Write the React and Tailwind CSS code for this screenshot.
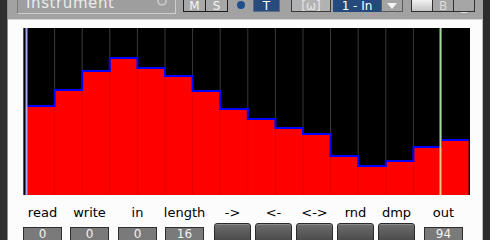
import React from "react";

// step sequencer values, as top-of-bar y inside the graph (px)
const BAR_TOPS = [106, 90, 71, 58, 68, 76, 91, 109, 119, 128, 134, 156, 166, 161, 147, 140].map(
  (y) => y - 28
);

const GRAPH_W = 446;
const GRAPH_H = 167;
const BAR_X0 = 3;
const BAR_W = 27.6;

function StepGraph() {
  const bottom = GRAPH_H;
  let d = `M ${BAR_X0} ${bottom} `;
  BAR_TOPS.forEach((t, i) => {
    const x = BAR_X0 + i * BAR_W;
    d += `L ${x} ${t} L ${x + BAR_W} ${t} `;
  });
  d += `L ${BAR_X0 + 16 * BAR_W} ${bottom} Z`;

  let line = "";
  BAR_TOPS.forEach((t, i) => {
    const x = BAR_X0 + i * BAR_W;
    line += `${i === 0 ? "M" : "L"} ${x} ${t} L ${x + BAR_W} ${t} `;
  });

  const playX = 416.5;
  const playTop = BAR_TOPS[14];

  return (
    <svg width={GRAPH_W} height={GRAPH_H} className="block">
      <rect x="0" y="0" width={GRAPH_W} height={GRAPH_H} fill="#000" />
      {Array.from({ length: 15 }).map((_, i) => (
        <line
          key={i}
          x1={BAR_X0 + (i + 1) * BAR_W}
          x2={BAR_X0 + (i + 1) * BAR_W}
          y1="0"
          y2={GRAPH_H}
          stroke="#3a3a3a"
          strokeWidth="1"
        />
      ))}
      <path d={d} fill="#ff0000" />
      {Array.from({ length: 15 }).map((_, i) => (
        <line
          key={i}
          x1={BAR_X0 + (i + 1) * BAR_W}
          x2={BAR_X0 + (i + 1) * BAR_W}
          y1={Math.max(BAR_TOPS[i], BAR_TOPS[i + 1])}
          y2={GRAPH_H}
          stroke="#e60000"
          strokeWidth="1"
        />
      ))}
      <path d={line} fill="none" stroke="#0000ff" strokeWidth="2" />
      <line x1="2.5" x2="2.5" y1="0" y2={GRAPH_H} stroke="#a8a8ff" strokeWidth="2" />
      <line x1={playX} x2={playX} y1="0" y2={playTop} stroke="#a6d8a0" strokeWidth="2" />
      <line x1={playX} x2={playX} y1={playTop} y2={GRAPH_H} stroke="#f0c88c" strokeWidth="2" />
    </svg>
  );
}

function ValueBox({ value }) {
  return (
    <div className="mt-[7px] w-[39px] h-[15px] shrink-0 bg-[#7a7a7a] border border-[#2e2e2e] text-[#f2f2f2] text-[12px] leading-[13px] text-center">
      {value}
    </div>
  );
}

function PadButton() {
  return (
    <div className="mt-[3px] w-[37px] h-[20px] shrink-0 rounded-[3px] border border-[#2a2a2a] bg-gradient-to-b from-[#6e6e6e] to-[#474747] shadow-[inset_0_1px_0_#8c8c8c]" />
  );
}

function Column({ label, className, children }) {
  return (
    <div className={"flex flex-col items-center " + className}>
      <div className="h-[14px] leading-[14px] text-[13px] text-black whitespace-nowrap">{label}</div>
      {children}
    </div>
  );
}

function HeaderBox({ className, children }) {
  return (
    <div
      className={
        "h-[13px] -mt-[1px] shrink-0 border border-[#1e1e1e] flex items-center justify-center text-[12px] leading-none " +
        className
      }
    >
      {children}
    </div>
  );
}

export default function App() {
  return (
    <div
      className="w-[490px] h-[240px] overflow-hidden flex bg-[#2a2a2a]"
      style={{ fontFamily: '"DejaVu Sans", Verdana, sans-serif' }}
    >
      <div className="w-[7px] h-full shrink-0 bg-[#2f2f2f]" />
      <div className="w-[476px] h-full shrink-0 flex flex-col border-l border-[#8c8c8c]">
        {/* header strip */}
        <div className="h-[19px] shrink-0 bg-[#a2a2a2] flex items-start overflow-hidden">
          <div className="ml-[9px] w-[159px] h-[17px] -mt-[3px] shrink-0 border-t border-l border-[#7c7c7c] border-b border-r border-b-[#cfcfcf] border-r-[#cfcfcf] bg-[#9e9e9e] flex items-start relative">
            <span className="ml-[8px] -mt-[2px] text-[15px] leading-[15px] tracking-[0.6px] text-[#ececec]">
              Instrument
            </span>
            <div className="absolute left-[139px] -top-[2px] w-[10px] h-[10px] rounded-full border-2 border-[#c4c4c4]" />
          </div>
          <HeaderBox className="ml-[7px] w-[23px] bg-[#a8a8a8] text-[#f4f4f4]">M</HeaderBox>
          <HeaderBox className="-ml-[1px] w-[23px] bg-[#a8a8a8] text-[#f4f4f4]">S</HeaderBox>
          <div className="ml-[9px] mt-[1px] w-[8px] h-[8px] shrink-0 rounded-full bg-[#1d4f8e]" />
          <HeaderBox className="ml-[8px] w-[27px] h-[11px] bg-[#264b7c] border-[#5d6f88] text-white">T</HeaderBox>
          <HeaderBox className="ml-[11px] w-[40px] bg-[#b2b2b2] border-[#3a3a3a] text-[#e6e6e6] text-[11px]">[ω]</HeaderBox>
          <HeaderBox className="ml-[2px] w-[48px] h-[12px] bg-[#244a7c] border-[#244a7c] text-white">1 - In</HeaderBox>
          <HeaderBox className="w-[22px] h-[12px] bg-[#a4a4a4] border-[#5a5a5a]">
            <svg width="10" height="6" viewBox="0 0 10 6">
              <path d="M0 0 L10 0 L5 6 Z" fill="#f4f4f4" />
            </svg>
          </HeaderBox>
          <HeaderBox className="ml-[8px] w-[22px] h-[12px] bg-gradient-to-b from-[#f2f2f2] to-[#c4c4c4] border-[#303030]" />
          <HeaderBox className="-ml-[1px] w-[22px] h-[12px] bg-[#a6a6a6] border-[#303030] text-[#dcdcdc] text-[11px]">B</HeaderBox>
          <HeaderBox className="-ml-[1px] w-[22px] h-[12px] bg-[#a6a6a6] border-[#303030] text-[#e6e6e6] text-[11px]">_</HeaderBox>
        </div>

        {/* body */}
        <div className="flex-1 min-h-0 bg-[#fcfcfc] border-t border-[#d4d4d4] border-r border-r-[#bdbdbd]">
          <div className="mt-[8px] ml-[15px] w-[446px] h-[167px] border-l border-[#555]">
            <StepGraph />
          </div>
          <div className="mt-[11px] ml-[15px] flex items-start">
            <Column label="read" className="w-[39px]"><ValueBox value="0" /></Column>
            <Column label="write" className="ml-[8px] w-[39px]"><ValueBox value="0" /></Column>
            <Column label="in" className="ml-[9px] w-[39px]"><ValueBox value="0" /></Column>
            <Column label="length" className="ml-[8px] w-[39px]"><ValueBox value="16" /></Column>
            <Column label="->" className="ml-[10px] w-[37px]"><PadButton /></Column>
            <Column label="<-" className="ml-[4px] w-[37px]"><PadButton /></Column>
            <Column label="<->" className="ml-[4px] w-[37px]"><PadButton /></Column>
            <Column label="rnd" className="ml-[4px] w-[37px]"><PadButton /></Column>
            <Column label="dmp" className="ml-[4px] w-[37px]"><PadButton /></Column>
            <Column label="out" className="ml-[9px] w-[39px]"><ValueBox value="94" /></Column>
          </div>
        </div>
      </div>
      <div className="flex-1 h-full bg-[#2c2c2c]" />
    </div>
  );
}
